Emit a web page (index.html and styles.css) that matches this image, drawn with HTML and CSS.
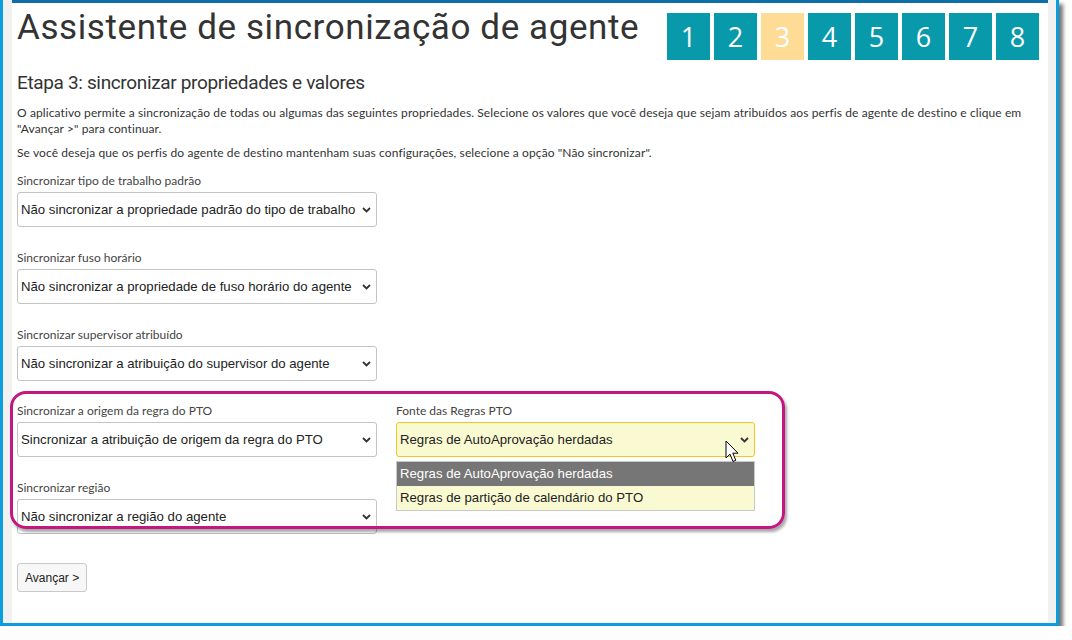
FILE: index.html
```html
<!DOCTYPE html>
<html lang="pt-BR">
<head>
  <meta charset="UTF-8">
  <title>Assistente de sincronização de agente</title>
  <link rel="stylesheet" href="styles.css">
</head>
<body>
  <div class="window">
    <div class="page">
      <div class="header">
        <h1>Assistente de sincronização de agente</h1>
        <div class="steps">
          <span class="step">1</span>
          <span class="step">2</span>
          <span class="step current">3</span>
          <span class="step">4</span>
          <span class="step">5</span>
          <span class="step">6</span>
          <span class="step">7</span>
          <span class="step">8</span>
        </div>
      </div>

      <h2>Etapa 3: sincronizar propriedades e valores</h2>
      <p class="intro">O aplicativo permite a sincronização de todas ou algumas das seguintes propriedades. Selecione os valores que você deseja que sejam atribuídos aos perfis de agente de destino e clique em "Avançar &gt;" para continuar.</p>
      <p class="intro second">Se você deseja que os perfis do agente de destino mantenham suas configurações, selecione a opção "Não sincronizar".</p>

      <div class="field">
        <label>Sincronizar tipo de trabalho padrão</label>
        <div class="select"><span>Não sincronizar a propriedade padrão do tipo de trabalho</span><svg class="chev" width="9" height="6" viewBox="0 0 9 6"><path d="M1 1 L4.5 4.5 L8 1" /></svg></div>
      </div>

      <div class="field">
        <label>Sincronizar fuso horário</label>
        <div class="select"><span>Não sincronizar a propriedade de fuso horário do agente</span><svg class="chev" width="9" height="6" viewBox="0 0 9 6"><path d="M1 1 L4.5 4.5 L8 1" /></svg></div>
      </div>

      <div class="field">
        <label>Sincronizar supervisor atribuído</label>
        <div class="select"><span>Não sincronizar a atribuição do supervisor do agente</span><svg class="chev" width="9" height="6" viewBox="0 0 9 6"><path d="M1 1 L4.5 4.5 L8 1" /></svg></div>
      </div>

      <div class="columns">
        <div class="col">
          <div class="field">
            <label>Sincronizar a origem da regra do PTO</label>
            <div class="select"><span>Sincronizar a atribuição de origem da regra do PTO</span><svg class="chev" width="9" height="6" viewBox="0 0 9 6"><path d="M1 1 L4.5 4.5 L8 1" /></svg></div>
          </div>
          <div class="field">
            <label>Sincronizar região</label>
            <div class="select"><span>Não sincronizar a região do agente</span><svg class="chev" width="9" height="6" viewBox="0 0 9 6"><path d="M1 1 L4.5 4.5 L8 1" /></svg></div>
          </div>
        </div>
        <div class="col">
          <div class="field open">
            <label>Fonte das Regras PTO</label>
            <div class="select active"><span>Regras de AutoAprovação herdadas</span><svg class="chev" width="9" height="6" viewBox="0 0 9 6"><path d="M1 1 L4.5 4.5 L8 1" /></svg></div>
            <ul class="options">
              <li class="selected">Regras de AutoAprovação herdadas</li>
              <li>Regras de partição de calendário do PTO</li>
            </ul>
          </div>
        </div>
      </div>

      <button class="next">Avançar &gt;</button>
    </div>

    <!-- callout around the PTO settings -->
    <div class="callout"></div>

    <svg class="cursor" width="16" height="24" viewBox="0 0 16 24">
      <path d="M1 1 L1 18 L5 14.2 L8 21.5 L10.8 20.3 L7.8 13.2 L13 13.2 Z" fill="#fff" stroke="#000" stroke-width="1" stroke-linejoin="round" />
    </svg>
  </div>
</body>
</html>
```

FILE: styles.css
```css
body {
  margin: 0;
  background: #fff;
  font-family: "Lato", "Open Sans", sans-serif;
  color: #333;
}
.window {
  position: relative;
  width: 1036px;
  height: 623px;
  border: 3px solid #0b9dde;
  border-top: none;
  background: #f1f1f1;
  padding: 0 8px 0 9px;
  box-shadow: 4px 4px 4px rgba(0, 0, 0, 0.55);
}
.page {
  background: #fff;
  border-top: 3px solid #0d6ea8;
  height: 100%;
  box-sizing: border-box;
  padding: 0 9px 0 5px;
}
.header {
  display: flex;
  justify-content: space-between;
  align-items: flex-start;
  padding-top: 10px;
}
h1 {
  margin: -5px 0 0 0;
  font-family: "Roboto", sans-serif;
  font-weight: 400;
  font-size: 35px;
  letter-spacing: 0.6px;
  line-height: 40px;
  color: #333;
}
.steps {
  display: flex;
  gap: 4px;
}
.step {
  width: 43px;
  height: 47px;
  background: #0899ab;
  color: #fff;
  font-family: "Open Sans", sans-serif;
  font-size: 27px;
  display: flex;
  align-items: center;
  justify-content: center;
}
.step.current {
  background: #fedc95;
}
h2 {
  margin: 11px 0 0 0;
  font-family: "Roboto", sans-serif;
  font-weight: 400;
  font-size: 19px;
  letter-spacing: -0.35px;
  line-height: 24px;
  color: #333;
}
.intro {
  margin: 10px 0 0 0;
  font-size: 12px;
  letter-spacing: 0.1px;
  line-height: 16px;
}
.intro.second {
  margin-top: 8px;
}
.field {
  margin-top: 12px;
  width: 360px;
}
.field + .field {
  margin-top: 23px;
}
label {
  display: block;
  font-size: 12px;
  line-height: 16px;
  color: #444;
  margin-bottom: 3px;
}
.select {
  display: flex;
  align-items: center;
  justify-content: space-between;
  height: 35px;
  box-sizing: border-box;
  border: 1px solid #c4c4c4;
  border-radius: 3px;
  padding: 0 5px 0 3px;
  font-family: "Liberation Sans", Arial, sans-serif;
  font-size: 13.2px;
  color: #222;
  background: #fff;
}
.chev {
  fill: none;
  stroke: #333;
  stroke-width: 1.8;
}
.columns {
  display: flex;
  gap: 19px;
  margin-top: 22px;
}
.columns .col > .field:first-child {
  margin-top: 0;
}
.open {
  position: relative;
  width: 359px;
}
.select.active {
  background: #fafad2;
  border-color: #f3c623;
}
.options {
  position: absolute;
  left: 0;
  right: 0;
  top: 58px;
  margin: 0;
  padding: 0;
  list-style: none;
  border: 1px solid #c9c9c9;
  background: #fafad2;
  font-family: "Liberation Sans", Arial, sans-serif;
  font-size: 13.2px;
  color: #222;
}
.options li {
  height: 24px;
  line-height: 24px;
  padding-left: 3px;
}
.options li.selected {
  background: #767676;
  color: #fff;
}
.next {
  margin-top: 29px;
  height: 29px;
  padding: 0 7px;
  font-family: "Liberation Sans", Arial, sans-serif;
  font-size: 12px;
  color: #222;
  background: #f7f7f7;
  border: 1px solid #c9c9c9;
  border-radius: 3px;
}
.callout {
  position: absolute;
  left: 7px;
  top: 391px;
  width: 775px;
  height: 138px;
  box-sizing: border-box;
  border: 3px solid #c2177e;
  border-radius: 16px;
  box-shadow: 2px 3px 3px rgba(0, 0, 0, 0.35);
}
.cursor {
  position: absolute;
  left: 722px;
  top: 440px;
}
```
